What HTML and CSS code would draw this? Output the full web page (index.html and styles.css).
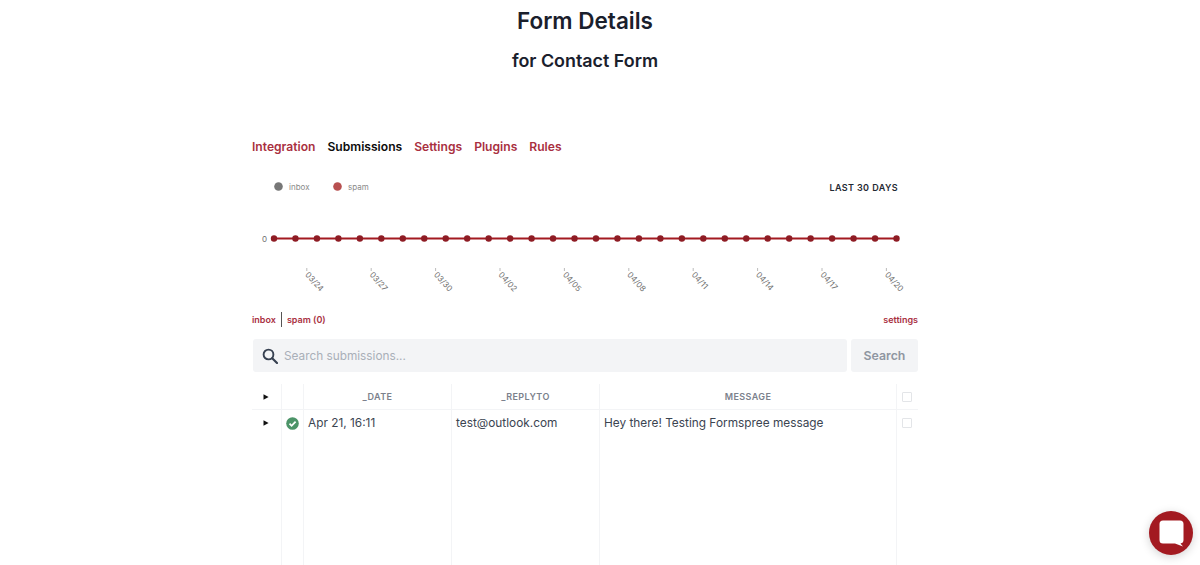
FILE: index.html
```html
<!DOCTYPE html>
<html lang="en">
<head>
<meta charset="utf-8">
<title>Form Details</title>
<link rel="stylesheet" href="styles.css">
</head>
<body>
<main class="page">
  <h1 class="title">Form Details</h1>
  <h2 class="subtitle">for Contact Form</h2>
  <nav class="nav">
    <a class="nav-link">Integration</a>
    <a class="nav-link nav-active">Submissions</a>
    <a class="nav-link">Settings</a>
    <a class="nav-link">Plugins</a>
    <a class="nav-link">Rules</a>
  </nav>
  <section class="chart-wrap">
    <svg id="chart" class="chart" width="666" height="130" viewBox="252 170 666 130"></svg>
  </section>
  <div class="tabs">
    <div class="tabs-left"><a class="tab tab-first">inbox</a><a class="tab tab-second">spam (0)</a></div>
    <a class="tab">settings</a>
  </div>
  <form class="search">
    <div class="search-box">
      <svg class="search-icon" width="16" height="16" viewBox="0 0 16 16"><circle cx="6.5" cy="6.5" r="4.9" fill="none" stroke="#374151" stroke-width="1.9"/><path d="M10.2 10.2 15 15" stroke="#374151" stroke-width="2.2" stroke-linecap="round"/></svg>
      <span class="search-placeholder">Search submissions...</span>
    </div>
    <div class="search-btn">Search</div>
  </form>
  <div class="table">
    <div class="cell head c-first"><svg class="arrow" width="6" height="6" viewBox="0 0 6 6"><path d="M0.5 0.3 5.6 3 0.5 5.7Z"/></svg></div>
    <div class="cell head"></div>
    <div class="cell head head-text">_DATE</div>
    <div class="cell head head-text">_REPLYTO</div>
    <div class="cell head head-text">MESSAGE</div>
    <div class="cell head c-last"><span class="check"></span></div>

    <div class="cell row c-first"><svg class="arrow" width="6" height="6" viewBox="0 0 6 6"><path d="M0.5 0.3 5.6 3 0.5 5.7Z"/></svg></div>
    <div class="cell row c-status"><svg width="13" height="13" viewBox="0 0 13 13"><circle cx="6.5" cy="6.5" r="6.3" fill="#4c9468"/><path d="M3.5 6.7 5.6 8.8 9.6 4.6" fill="none" stroke="#fff" stroke-width="1.8"/></svg></div>
    <div class="cell row text">Apr 21, 16:11</div>
    <div class="cell row text">test@outlook.com</div>
    <div class="cell row text">Hey there! Testing Formspree message</div>
    <div class="cell row c-last"><span class="check"></span></div>

    <div class="cell fill"></div><div class="cell fill"></div><div class="cell fill"></div><div class="cell fill"></div><div class="cell fill"></div><div class="cell fill c-last"></div>
  </div>
</main>
<a class="chat" aria-label="Chat">
  <svg class="chat-icon" width="25" height="27" viewBox="0 0 25 27"><path d="M4 0.500h17a3.500 3.500 0 0 1 3.500 3.500v16a3.500 3.500 0 0 1-3 3.500l2.500 3-8-3H4A3.500 3.500 0 0 1 0.500 20V4A3.500 3.500 0 0 1 4 0.500Z" fill="#fff"/></svg>
</a>
<script src="chart.js"></script>
</body>
</html>
```

FILE: styles.css
```css
* { box-sizing: border-box; }
html, body { margin: 0; height: 565px; overflow: hidden; background: #fff; }
body { font-family: Inter, "Liberation Sans", sans-serif; color: #1f2933; }
.page { width: 666px; margin-left: 252px; display: flex; flex-direction: column; height: 565px; }
.title { margin: 8px 0 0; font-size: 22.5px; line-height: 26px; font-weight: 600; text-align: center; color: #1a202c; }
.subtitle { margin: 15px 0 0; font-size: 17.9px; line-height: 23px; font-weight: 600; text-align: center; color: #1a202c; }
.nav { display: flex; gap: 12px; margin-top: 66px; height: 17px; font-size: 12.1px; line-height: 17px; font-weight: 600; }
.nav-link { color: #a9303f; }
.nav-active { color: #0c0c0c; }
.chart-wrap { margin-top: 15px; height: 130px; }
.chart { display: block; }
.legend { font-size: 8px; fill: #8a8a8a; }
.axis { font-size: 8px; fill: #6f6f6f; }
.days { font-size: 9px; font-weight: 600; letter-spacing: 0.4px; fill: #1f2933; }
.tabs { display: flex; justify-content: space-between; align-items: center; height: 15px; margin-top: 12px; font-size: 9px; font-weight: 600; line-height: 15px; }
.tabs-left { display: flex; }
.tab { color: #a9303f; }
.tab-first { padding-right: 5px; border-right: 1px solid #555; }
.tab-second { padding-left: 5px; }
.search { display: flex; gap: 4px; margin-top: 12px; height: 33px; padding-left: 1px; }
.search-box { flex: 1; display: flex; align-items: center; gap: 6px; padding-left: 9px; background: #f3f4f6; border-radius: 3px; }
.search-icon { flex: none; }
.search-placeholder { font-size: 11.8px; color: #a9afb8; }
.search-btn { width: 67px; display: flex; align-items: center; justify-content: center; background: #f3f4f6; border-radius: 3px; font-size: 12.3px; font-weight: 600; color: #8f96a1; }
.table { display: grid; grid-template-columns: 30px 22px 148px 148px 297px 21px; grid-template-rows: 26px 26px 1fr; margin-top: 12px; flex: 1; }
.cell { border-right: 1px solid #f3f4f6; display: flex; align-items: center; }
.head { border-bottom: 1px solid #f3f4f6; }
.head-text { justify-content: center; font-size: 9px; font-weight: 600; letter-spacing: 0.4px; color: #7b818c; }
.c-first { padding-left: 11px; }
.c-status { justify-content: center; }
.c-last { border-right: 0; justify-content: center; padding-right: 1px; }
.row.c-last { align-items: flex-start; padding-top: 8px; }
.text { padding-left: 4px; font-size: 11.85px; color: #3b4451; }
.arrow { fill: #111; }
.check { width: 10px; height: 10px; border: 1px solid #e3e5e8; border-radius: 1px; background: #fff; }
.chat { position: fixed; left: 1149px; top: 511px; width: 44px; height: 44px; border-radius: 50%; background: #a31a21; display: flex; align-items: center; justify-content: center; box-shadow: 0 2px 10px rgba(0,0,0,.18); }
.chat-icon { margin: 1px 0 0 1px; }
```

FILE: chart.js
```js
var svg = document.getElementById('chart');
var html = '';
html += '<circle cx="278.500" cy="186.500" r="4.300" fill="#777"/><text class="legend" x="289" y="189.500">inbox</text>';
html += '<circle cx="337.500" cy="186.500" r="4.300" fill="#b85050"/><text class="legend" x="348" y="189.500">spam</text>';
html += '<text class="days" x="898" y="191" text-anchor="end">LAST 30 DAYS</text>';
html += '<text class="axis" x="267" y="241.500" text-anchor="end">0</text>';
html += '<line x1="274" y1="238.500" x2="896.500" y2="238.500" stroke="#a31a21" stroke-width="1.800"/>';
for (var i = 0; i < 30; i++) {
  html += '<circle cx="' + (274 + i * 21.466) + '" cy="238.500" r="3.200" fill="#8e1c24"/>';
}
var labels = ['03/24','03/27','03/30','04/02','04/05','04/08','04/11','04/14','04/17','04/20'];
labels.forEach(function (label, i) {
  var x = 306.800 + i * 64.400;
  html += '<line x1="' + x + '" y1="268" x2="' + x + '" y2="271" stroke="#aaa" stroke-width="0.800"/>';
  html += '<text class="axis" transform="translate(' + (x - 2) + ' 275) rotate(48)">' + label + '</text>';
});
svg.innerHTML = html;
```
